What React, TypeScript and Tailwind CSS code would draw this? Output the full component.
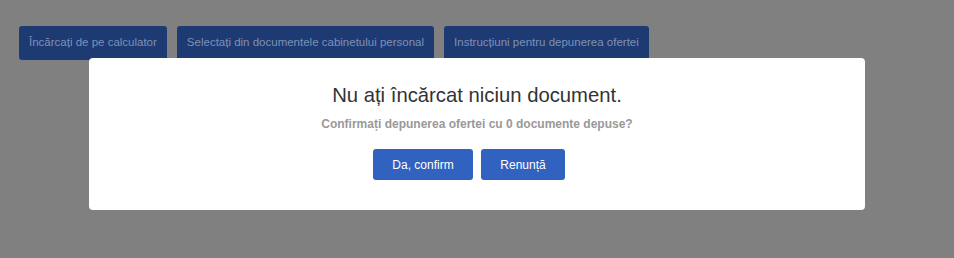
const tabs = ['Încărcați de pe calculator', 'Selectați din documentele cabinetului personal', 'Instrucțiuni pentru depunerea ofertei'];

export default function App() {
    return (
        <div className="relative h-[258px] w-[954px] overflow-hidden bg-[#808080] font-['Liberation_Sans',Arial,sans-serif]">
            {/* Page behind the overlay */}
            <div className="flex gap-[10px] pt-[26px] pl-[19px]">
                {tabs.map((tab) => (
                    <button key={tab} className="h-[34px] rounded-[3px] bg-[#1d3a73] px-[10px] text-[11.5px] text-[#7f91b6]">
                        {tab}
                    </button>
                ))}
            </div>

            {/* Confirm dialog */}
            <div className="absolute top-[58px] left-[89px] flex h-[152px] w-[776px] flex-col items-center rounded-[4px] bg-white">
                <h2 className="mt-[24px] text-[20.3px] leading-[26px] text-[#333]">Nu ați încărcat niciun document.</h2>
                <p className="mt-[8px] text-[12px] leading-[16px] font-bold text-[#999]">Confirmați depunerea ofertei cu 0 documente depuse?</p>
                <div className="mt-[17px] flex gap-[8px] pr-[16px]">
                    <button className="h-[31px] w-[100px] rounded-[3px] bg-[#3162c0] text-[12px] text-white">Da, confirm</button>
                    <button className="h-[31px] w-[84px] rounded-[3px] bg-[#3162c0] text-[12px] text-white">Renunță</button>
                </div>
            </div>
        </div>
    );
}
